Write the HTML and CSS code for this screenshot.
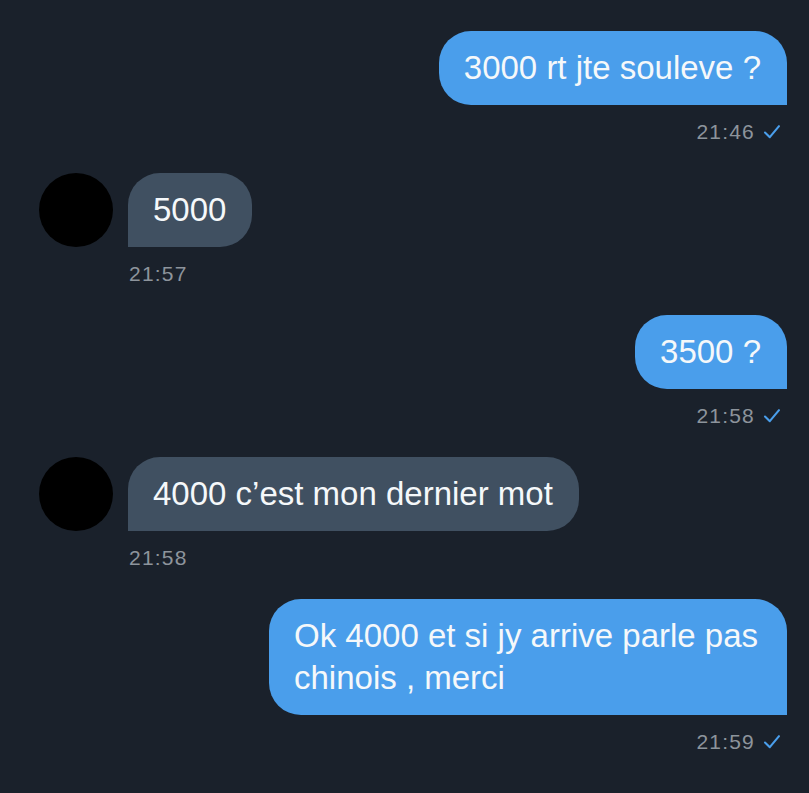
FILE: index.html
```html
<!DOCTYPE html>
<html lang="fr">

<head>
    <meta charset="UTF-8">
    <meta name="viewport" content="width=device-width, initial-scale=1.0">
    <title>Messages</title>
    <link rel="stylesheet" href="styles.css">
</head>

<body>
    <div class="chat">
        <div class="msg sent">
            <div class="bubble">3000 rt jte souleve ?</div>
            <div class="meta">21:46
                <svg class="check" viewBox="0 0 18 16"><path d="M2 8.5 L6.8 13.2 L16 2.2" /></svg>
            </div>
        </div>

        <div class="msg received">
            <div class="avatar"></div>
            <div class="body">
                <div class="bubble">5000</div>
                <div class="meta">21:57</div>
            </div>
        </div>

        <div class="msg sent">
            <div class="bubble">3500 ?</div>
            <div class="meta">21:58
                <svg class="check" viewBox="0 0 18 16"><path d="M2 8.5 L6.8 13.2 L16 2.2" /></svg>
            </div>
        </div>

        <div class="msg received">
            <div class="avatar"></div>
            <div class="body">
                <div class="bubble">4000 c’est mon dernier mot</div>
                <div class="meta">21:58</div>
            </div>
        </div>

        <div class="msg sent">
            <div class="bubble">Ok 4000 et si jy arrive parle pas chinois , merci</div>
            <div class="meta">21:59
                <svg class="check" viewBox="0 0 18 16"><path d="M2 8.5 L6.8 13.2 L16 2.2" /></svg>
            </div>
        </div>
    </div>
</body>

</html>
```

FILE: styles.css
```css
body {
    margin: 0;
    background-color: #1a212b;
    font-family: "Liberation Sans", Arial, sans-serif;
    color: #f5f8fa;
}

.chat {
    display: flex;
    flex-direction: column;
    padding: 31px 22px 0 39px;
}

.msg {
    display: flex;
    margin-bottom: 28px;
}

.sent {
    flex-direction: column;
    align-items: flex-end;
}

.received {
    flex-direction: row;
    align-items: flex-start;
    gap: 15px;
}

.received .body {
    display: flex;
    flex-direction: column;
    align-items: flex-start;
}

.avatar {
    width: 74px;
    height: 74px;
    border-radius: 50%;
    background-color: #000;
    flex-shrink: 0;
}

.bubble {
    box-sizing: border-box;
    max-width: 518px;
    padding: 16px 26px 16px 25px;
    font-size: 33px;
    line-height: 42px;
    border-radius: 32px;
}

.sent .bubble {
    background-color: #4a9eeb;
    border-bottom-right-radius: 0;
}

.received .bubble {
    background-color: #405061;
    border-bottom-left-radius: 0;
}

.meta {
    display: flex;
    align-items: center;
    gap: 8px;
    margin-top: 14px;
    height: 26px;
    font-size: 21px;
    letter-spacing: 1.2px;
    color: #8d949c;
}

.sent .meta {
    padding-right: 6px;
}

.received .meta {
    padding-left: 1px;
}

.check {
    width: 18px;
    height: 16px;
    fill: none;
    stroke: #4a9eeb;
    stroke-width: 2.1;
    stroke-linecap: round;
    stroke-linejoin: round;
}
```
